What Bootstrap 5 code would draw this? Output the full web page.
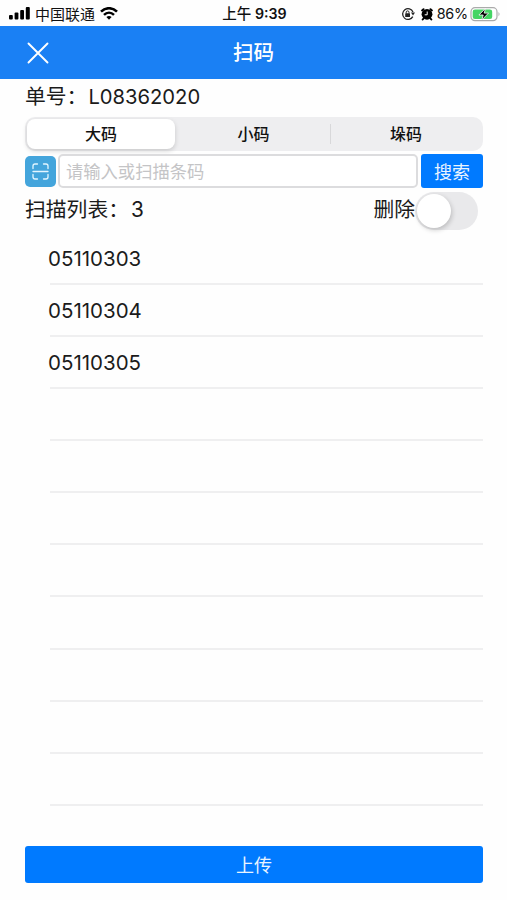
<!DOCTYPE html>
<html lang="zh-CN">
<head>
<meta charset="utf-8">
<meta name="viewport" content="width=device-width, initial-scale=1">
<title>扫码</title>
<link href="https://cdn.jsdelivr.net/npm/bootstrap@5.3.0/dist/css/bootstrap.min.css" rel="stylesheet">
<style>
body{font-family:Inter,"Noto Sans CJK SC",sans-serif;color:#1b1b1b;background:#fefefe;line-height:1}
svg{display:block;flex:none}
.screen{height:900px}
.status-bar{height:26px;padding:2px 6px 0 8px;font-size:15px;color:#111}
.status-bar>div{flex:1 1 0}
.carrier{font-size:15px}
.clock{font-size:14.2px;font-weight:600}
.clock span{font-weight:500;font-size:14.5px}
.battery-level{font-size:14.4px;letter-spacing:-.2px}
.title-bar{height:53px;background:#1a80f4;padding:0 26px}
.title-bar>*{flex:1 1 0}
.title-bar h1{font-size:20.5px;font-weight:500;padding-top:2px}
.page{padding:0 24px 17px 25px}
.label-text{font-size:20.8px}
.digits{font-size:20.2px}
.order-row{height:38px;padding-bottom:1px}
.order-row .digits{margin-left:1px}
.segments{height:34px;background:#eeeef0;border-radius:10px;padding:2px;font-size:16px;font-weight:500}
.segment{flex:1 1 0;border-radius:8px;color:#111}
.segment.selected{flex:0 0 148px;background:#fff;box-shadow:0 2px 5px rgba(0,0,0,.16)}
.segment.middle{flex:0 0 155px;padding-left:2px}
.segment-line{width:1px;height:20px;background:#d8d8da}
.search-row{height:34px;margin-top:3px;gap:3px}
.scan-btn{width:31px;height:31px;border-radius:5px;background:#44a5dc}
.code-input{height:34px;border:2px solid #dcdcde;border-radius:5px;font-size:17.3px;padding:0 6px;min-width:0}
.code-input::placeholder{color:#c4c4c6}
.scan-btn+.code-input{margin-left:-1px}
.search-btn{width:62px;height:34px;border-radius:3px;font-size:18px}
.btn-blue,.btn-blue:hover{background:#007aff;color:#eaf4ff;border:0;padding:2px 0 0}
.list-head{height:42px;padding-top:3px}
.switch-track{width:63px;height:38px;border-radius:19px;background:#e9e9eb;padding:2px;margin-right:5px}
.switch-knob{width:34px;height:34px;border-radius:50%;background:#fff;box-shadow:1px 2px 5px rgba(0,0,0,.2)}
.codes{margin:2.6px 0 0 25px}
.codes li{height:52.13px;border-bottom:2px solid #efeff0;font-size:20.5px;padding-top:3px}
.codes li span{margin-left:-2px}
.upload-btn{height:37px;border-radius:3px;font-size:18px}
</style>
<script src="https://cdn.jsdelivr.net/npm/bootstrap@5.3.0/dist/js/bootstrap.bundle.min.js"></script>
</head>
<body>
<div class="screen d-flex flex-column">
  <header>
    <div class="status-bar d-flex align-items-center">
      <div class="d-flex align-items-center">
        <svg width="23" height="14" viewBox="0 0 23 14"><rect x="1" y="8" width="3.8" height="4.5" rx="1"/><rect x="6.6" y="5.500" width="3.8" height="7" rx="1"/><rect x="12.200" y="3" width="3.800" height="9.500" rx="1"/><rect x="17.800" y="0" width="4" height="12.500" rx="1"/></svg>
        <span class="carrier ms-1">中国联通</span>
        <svg class="ms-1" width="20" height="15" viewBox="0 0 20 15" fill="none" stroke="#000" stroke-width="2.500"><path d="M2 4.700C6.500 0 13.500 0 18 4.700M5 7.900C8 5 12 5 15 7.900"/><path d="M7.400 10.100Q10 8 12.600 10.100L10 12.800Z" fill="#000" stroke="none"/></svg>
      </div>
      <div class="clock text-center text-nowrap"><span>上午</span> 9:39</div>
      <div class="d-flex align-items-center justify-content-end">
        <svg width="14" height="14" viewBox="0 0 14 14" fill="none" stroke="#222" stroke-width="1.300"><path d="M11.800 9.600A5.400 5.400 0 1 1 12 4.900"/><path d="M10 5.500h4l-2 3z" fill="#222" stroke="none"/><rect x="4.200" y="6.300" width="4.800" height="3.700" rx=".6" fill="#222" stroke="none"/><path d="M5.200 6.500V5.300a1.400 1.400 0 0 1 2.800 0v1.200" stroke-width="1"/></svg>
        <svg class="ms-1" width="14" height="14" viewBox="0 0 14 14"><circle cx="8" cy="7.300" r="5.400"/><path d="M3.100 3.400L4.500 2.200M12.900 3.400L11.500 2.200M4.500 11.500l-.8 1M11.500 11.500l.8 1" stroke="#000" stroke-width="2" stroke-linecap="round"/><path d="M8.200 4.500v3.300H5.700" fill="none" stroke="#fff" stroke-width="1"/></svg>
        <span class="battery-level ms-1">86%</span>
        <svg width="31" height="15" viewBox="0 0 31 15" style="margin-left:2px"><rect x="1" y="0.700" width="26" height="13" rx="4" fill="#fff" stroke="#aaa" stroke-width="1.200"/><rect x="2.700" y="2.400" width="19.500" height="9.600" rx="2.300" fill="#45d564"/><path d="M28.500 5.100q2 2.100 0 4.200z" fill="#aaa"/><path d="M15.500 1.400L8.900 8h4.300l-1.400 5 6.700-6.900h-4.300z" fill="#000" stroke="#fff" stroke-width=".8"/></svg>
      </div>
    </div>
    <nav class="title-bar d-flex align-items-center text-white">
      <div><svg width="24" height="24" viewBox="0 0 24 24" stroke="#fff" stroke-width="1.900" stroke-linecap="round"><path d="M2.500 2.500l19 19M21.500 2.500l-19 19"/></svg></div>
      <h1 class="m-0 text-center">扫码</h1>
      <div></div>
    </nav>
  </header>
  <main class="page d-flex flex-column flex-grow-1">
    <div class="order-row label-text d-flex align-items-center">单号：<span class="digits">L08362020</span></div>
    <div class="segments d-flex align-items-center">
      <div class="segment selected h-100 d-flex align-items-center justify-content-center">大码</div>
      <div class="segment middle h-100 d-flex align-items-center justify-content-center">小码</div>
      <div class="segment-line"></div>
      <div class="segment h-100 d-flex align-items-center justify-content-center">垛码</div>
    </div>
    <div class="search-row d-flex align-items-center">
      <button class="scan-btn btn border-0 p-0 d-flex align-items-center justify-content-center flex-shrink-0" type="button" aria-label="扫描"><svg width="19" height="19" viewBox="0 0 19 19" fill="none" stroke="#e4f6ff" stroke-width="1.300" stroke-linecap="round"><path d="M2 6.500V4q0-2 2-2h2.500M12.500 2H15q2 0 2 2v2.500M17 12.500V15q0 2-2 2h-2.500M6.500 17H4q-2 0-2-2v-2.500M2 9.500h15"/></svg></button>
      <input class="code-input form-control flex-grow-1" type="text" placeholder="请输入或扫描条码">
      <button class="search-btn btn btn-blue flex-shrink-0" type="button">搜索</button>
    </div>
    <div class="list-head label-text d-flex align-items-center">
      <span>扫描列表：<span style="margin-left:2px">3</span></span>
      <span class="ms-auto">删除</span>
      <div class="switch-track" role="switch" aria-checked="false"><div class="switch-knob"></div></div>
    </div>
    <ul class="codes list-unstyled">
      <li class="d-flex align-items-center"><span>05110303</span></li>
      <li class="d-flex align-items-center"><span>05110304</span></li>
      <li class="d-flex align-items-center"><span>05110305</span></li>
      <li></li><li></li><li></li><li></li><li></li><li></li><li></li><li></li>
    </ul>
    <button class="upload-btn btn btn-blue w-100 mt-auto" type="button">上传</button>
  </main>
</div>
</body>
</html>
